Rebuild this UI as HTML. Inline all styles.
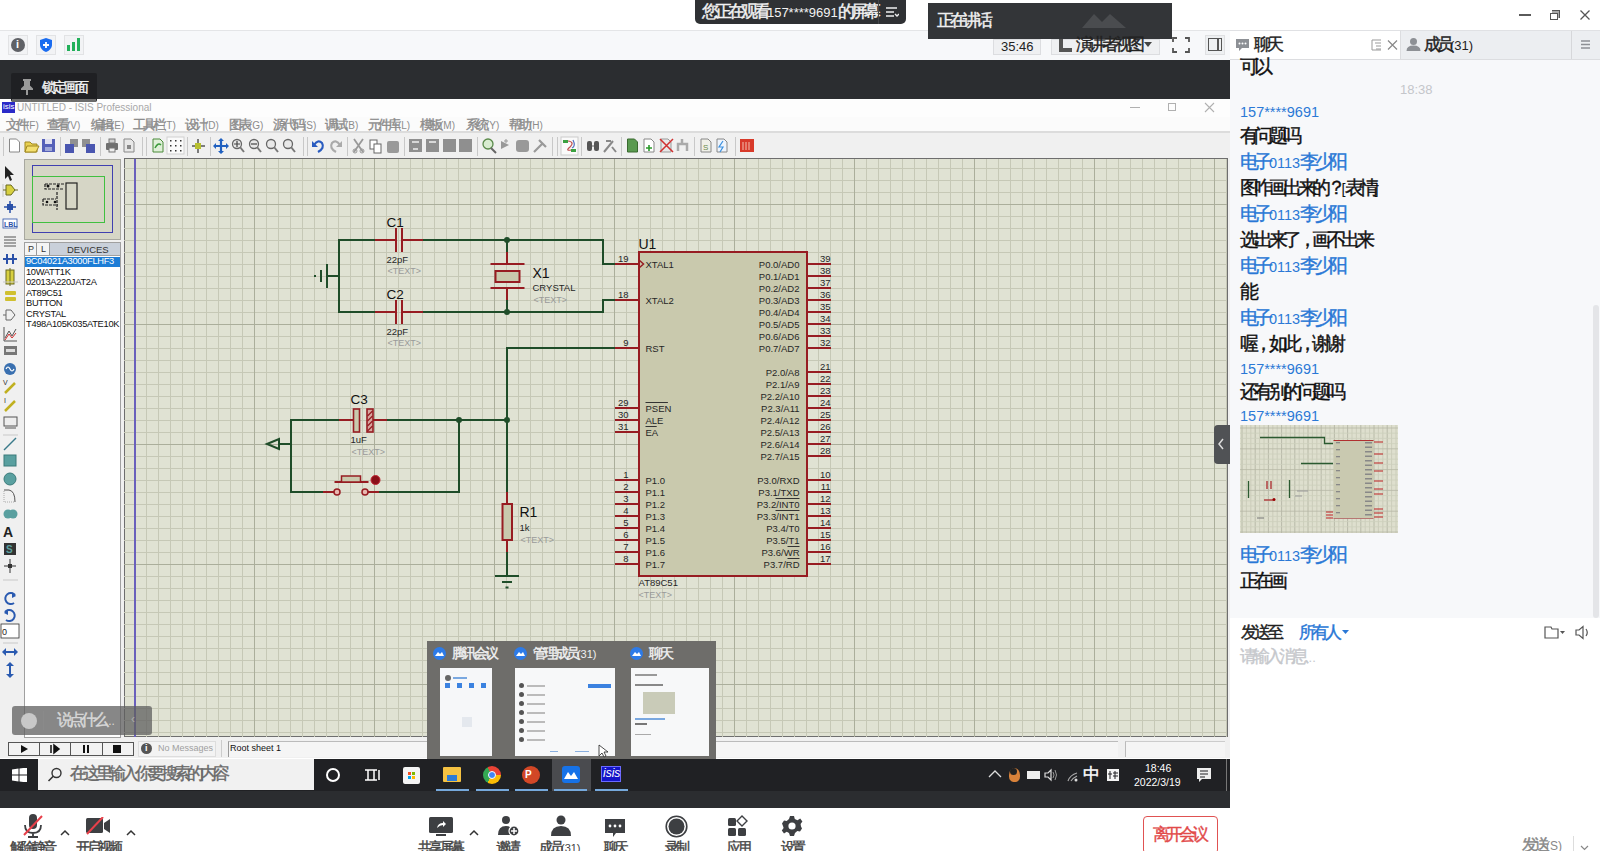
<!DOCTYPE html>
<html><head><meta charset="utf-8">
<style>
*{margin:0;padding:0;box-sizing:border-box}
html,body{width:1600px;height:851px;overflow:hidden;background:#fff;font-family:"Liberation Sans",sans-serif;position:relative}
.a{position:absolute}
.t{position:absolute;white-space:nowrap;line-height:1}
svg text{font-family:"Liberation Sans",sans-serif}
.c{display:inline-block;width:0.769em;font-size:1.3em;line-height:0.769;font-style:normal;text-align:center;-webkit-text-stroke-width:0.4px}
</style></head><body>

<div class="a" style="left:0;top:0;width:1600px;height:30px;background:#fff"></div>
<div class="a" style="left:0;top:30px;width:1230px;height:30px;background:#f7f8fa;border-top:1px solid #e4e5e7"></div>
<div class="a" style="left:0;top:60px;width:1230px;height:39px;background:#2b2d30"></div>
<div class="a" style="left:0;top:99px;width:1230px;height:659px;background:#f0f0f0;overflow:hidden">
<div class="a" style="left:0;top:0;width:1230px;height:18px;background:#fdfdfd"></div>
<div class="a" style="left:2px;top:3px;width:13px;height:11px;background:#2a2ac8"></div><div class="t" style="left:3px;top:4px;font-size:8px;color:#fff">isis</div>
<div class="t" style="left:17px;top:4px;font-size:10px;color:#a8a8a8">UNTITLED - ISIS Professional</div>
<div class="a" style="left:1130px;top:8px;width:10px;height:1px;background:#b0b0b0"></div>
<div class="a" style="left:1168px;top:4px;width:8px;height:8px;border:1px solid #b0b0b0"></div>
<svg class="a" style="left:1204px;top:3px" width="11" height="11"><path d="M1 1L10 10M10 1L1 10" stroke="#b0b0b0" stroke-width="1.1"/></svg>
<div class="a" style="left:0;top:18px;width:1230px;height:16px;background:#fbfbfb;border-bottom:2px solid #dcdcdc"></div>
<div class="t" style="left:6px;top:21px;font-size:10px;color:#8c8c8c"><i class="c">文</i><i class="c">件</i>(F)</div>
<div class="t" style="left:47px;top:21px;font-size:10px;color:#8c8c8c"><i class="c">查</i><i class="c">看</i>(V)</div>
<div class="t" style="left:91px;top:21px;font-size:10px;color:#8c8c8c"><i class="c">编</i><i class="c">辑</i>(E)</div>
<div class="t" style="left:133px;top:21px;font-size:10px;color:#8c8c8c"><i class="c">工</i><i class="c">具</i><i class="c">栏</i>(T)</div>
<div class="t" style="left:185px;top:21px;font-size:10px;color:#8c8c8c"><i class="c">设</i><i class="c">计</i>(D)</div>
<div class="t" style="left:229px;top:21px;font-size:10px;color:#8c8c8c"><i class="c">图</i><i class="c">表</i>(G)</div>
<div class="t" style="left:273px;top:21px;font-size:10px;color:#8c8c8c"><i class="c">源</i><i class="c">代</i><i class="c">码</i>(S)</div>
<div class="t" style="left:325px;top:21px;font-size:10px;color:#8c8c8c"><i class="c">调</i><i class="c">试</i>(B)</div>
<div class="t" style="left:368px;top:21px;font-size:10px;color:#8c8c8c"><i class="c">元</i><i class="c">件</i><i class="c">库</i>(L)</div>
<div class="t" style="left:420px;top:21px;font-size:10px;color:#8c8c8c"><i class="c">模</i><i class="c">板</i>(M)</div>
<div class="t" style="left:466px;top:21px;font-size:10px;color:#8c8c8c"><i class="c">系</i><i class="c">统</i>(Y)</div>
<div class="t" style="left:509px;top:21px;font-size:10px;color:#8c8c8c"><i class="c">帮</i><i class="c">助</i>(H)</div>
<div class="a" style="left:0;top:59px;width:22px;height:580px;background:#f0f0f0"></div>
<div class="a" style="left:24px;top:60px;width:97px;height:81px;background:#d6d6c6;border:1px solid #a8a8a0"></div>
<div class="a" style="left:32px;top:66px;width:81px;height:68px;border:1.5px solid #4040b0"></div>
<div class="a" style="left:32px;top:77px;width:73px;height:47px;border:1.5px solid #40c040"></div>
<svg class="a" style="left:0;top:0" width="130" height="140" viewBox="0 99 130 140"><g stroke="#222" stroke-width="1.2" fill="none"><rect x="66" y="183" width="11" height="26"/><path d="M45 184V189H64M45 184H64M43 199V205H58M43 199H56M57 192V210" stroke-dasharray="3 1"/></g><g fill="#111"><circle cx="48" cy="186" r="1.5"/><circle cx="58" cy="186" r="1.5"/><circle cx="47" cy="202" r="1.3"/><circle cx="55" cy="202" r="1.3"/></g></svg>
<div class="a" style="left:24px;top:143px;width:97px;height:496px;background:#fff;border:1px solid #a0a0a0"></div>
<div class="a" style="left:24px;top:143px;width:97px;height:14px;background:#c9d0da;border:1px solid #a0a0a0"></div>
<div class="a" style="left:25px;top:144px;width:12px;height:12px;background:#f4f4f4;border-right:1px solid #999"></div><div class="t" style="left:28px;top:146px;font-size:9px;color:#333">P</div>
<div class="a" style="left:37px;top:144px;width:13px;height:12px;background:#f4f4f4;border-right:1px solid #999"></div><div class="t" style="left:41px;top:146px;font-size:9px;color:#333">L</div>
<div class="t" style="left:67px;top:146px;font-size:9.5px;color:#333">DEVICES</div>
<div class="a" style="left:25px;top:158px;width:95px;height:10px;background:#1d7dd6"></div>
<div class="t" style="left:26px;top:158.0px;font-size:9.3px;letter-spacing:-0.3px;color:#fff">9C04021A3000FLHF3</div>
<div class="t" style="left:26px;top:168.5px;font-size:9.3px;letter-spacing:-0.3px;color:#111">10WATT1K</div>
<div class="t" style="left:26px;top:179.0px;font-size:9.3px;letter-spacing:-0.3px;color:#111">02013A220JAT2A</div>
<div class="t" style="left:26px;top:189.5px;font-size:9.3px;letter-spacing:-0.3px;color:#111">AT89C51</div>
<div class="t" style="left:26px;top:200.0px;font-size:9.3px;letter-spacing:-0.3px;color:#111">BUTTON</div>
<div class="t" style="left:26px;top:210.5px;font-size:9.3px;letter-spacing:-0.3px;color:#111">CRYSTAL</div>
<div class="t" style="left:26px;top:221.0px;font-size:9.3px;letter-spacing:-0.3px;color:#111">T498A105K035ATE10K</div>
<div class="a" style="left:124px;top:59px;width:1104px;height:579px;background:#e0e2d3;border:1px solid #6e6e6e"></div>
</div>
<svg class="a" style="left:0;top:0" width="1230" height="760" viewBox="0 0 1230 760">
<defs>
<pattern id="gm" x="134" y="204" width="12" height="12" patternUnits="userSpaceOnUse"><path d="M0 0.5H12M0.5 0V12" stroke="#c6c8b6" stroke-width="1" fill="none"/></pattern>
<pattern id="gM" x="134" y="204" width="120" height="120" patternUnits="userSpaceOnUse"><path d="M0 0.5H120M0.5 0V120" stroke="#abae9b" stroke-width="1" fill="none"/></pattern>
</defs>
<rect x="124" y="159" width="1103" height="578" fill="url(#gm)"/>
<rect x="124" y="159" width="1103" height="578" fill="url(#gM)"/>
<line x1="135" y1="159" x2="135" y2="737" stroke="#6a60bc" stroke-width="2"/>

<g transform="translate(0.5,0)"><path d="M374.5 240H338.5V312H374.5" stroke="#1f4d29" stroke-width="2" fill="none"/>
<path d="M422.5 240H602.5V264H614.5" stroke="#1f4d29" stroke-width="2" fill="none"/>
<path d="M422.5 312H602.5V300H614.5" stroke="#1f4d29" stroke-width="2" fill="none"/>
<line x1="506.5" y1="240" x2="506.5" y2="252" stroke="#1f4d29" stroke-width="2"/>
<line x1="506.5" y1="300" x2="506.5" y2="312" stroke="#1f4d29" stroke-width="2"/>
<path d="M614.5 348H506.5V492" stroke="#1f4d29" stroke-width="2" fill="none"/>
<path d="M506.5 552V576" stroke="#1f4d29" stroke-width="2" fill="none"/>
<path d="M338.5 420H290.5V492H322.5" stroke="#1f4d29" stroke-width="2" fill="none"/>
<path d="M386.5 420H506.5" stroke="#1f4d29" stroke-width="2" fill="none"/>
<path d="M378.5 492H458.5V420" stroke="#1f4d29" stroke-width="2" fill="none"/>
<path d="M278.5 444H290.5" stroke="#1f4d29" stroke-width="2" fill="none"/>
<path d="M338.5 276H326.5" stroke="#1f4d29" stroke-width="2" fill="none"/>
<circle cx="506.5" cy="240" r="3" fill="#1f4d29"/>
<circle cx="506.5" cy="312" r="3" fill="#1f4d29"/>
<circle cx="458.5" cy="420" r="3" fill="#1f4d29"/>
<circle cx="506.5" cy="420" r="3" fill="#1f4d29"/>
<line x1="326.5" y1="264" x2="326.5" y2="288" stroke="#1f4d29" stroke-width="2"/>
<line x1="320.5" y1="270" x2="320.5" y2="282" stroke="#1f4d29" stroke-width="2"/>
<line x1="314.5" y1="275" x2="314.5" y2="277" stroke="#1f4d29" stroke-width="2"/>
<path d="M266.5 444L278.5 439V449Z" stroke="#1f4d29" stroke-width="2" fill="none"/>
<line x1="374.5" y1="240" x2="395.5" y2="240" stroke="#971c22" stroke-width="2"/>
<line x1="401.5" y1="240" x2="422.5" y2="240" stroke="#971c22" stroke-width="2"/>
<line x1="395.5" y1="228" x2="395.5" y2="252" stroke="#971c22" stroke-width="2"/>
<line x1="401.5" y1="228" x2="401.5" y2="252" stroke="#971c22" stroke-width="2"/>
<line x1="374.5" y1="312" x2="395.5" y2="312" stroke="#971c22" stroke-width="2"/>
<line x1="401.5" y1="312" x2="422.5" y2="312" stroke="#971c22" stroke-width="2"/>
<line x1="395.5" y1="300" x2="395.5" y2="324" stroke="#971c22" stroke-width="2"/>
<line x1="401.5" y1="300" x2="401.5" y2="324" stroke="#971c22" stroke-width="2"/>
<line x1="506.5" y1="252" x2="506.5" y2="264" stroke="#971c22" stroke-width="2"/>
<line x1="506.5" y1="288" x2="506.5" y2="300" stroke="#971c22" stroke-width="2"/>
<line x1="490" y1="264" x2="524" y2="264" stroke="#971c22" stroke-width="2"/>
<line x1="490" y1="288" x2="524" y2="288" stroke="#971c22" stroke-width="2"/>
<rect x="495" y="271" width="24" height="11" fill="#c9c9ad" stroke="#971c22" stroke-width="2"/>
<line x1="338.5" y1="420" x2="352.5" y2="420" stroke="#971c22" stroke-width="2"/>
<line x1="372.5" y1="420" x2="386.5" y2="420" stroke="#971c22" stroke-width="2"/>
<rect x="353" y="409" width="6" height="23" fill="#c9c9ad" stroke="#971c22" stroke-width="1.6"/>
<rect x="366.5" y="409" width="6" height="23" fill="#d8a8a0" stroke="#971c22" stroke-width="1.6"/>
<line x1="367" y1="416" x2="372" y2="411" stroke="#971c22" stroke-width="1.2"/>
<line x1="367" y1="421" x2="372" y2="416" stroke="#971c22" stroke-width="1.2"/>
<line x1="367" y1="426" x2="372" y2="421" stroke="#971c22" stroke-width="1.2"/>
<line x1="367" y1="431" x2="372" y2="426" stroke="#971c22" stroke-width="1.2"/>
<line x1="322.5" y1="492" x2="333.5" y2="492" stroke="#971c22" stroke-width="2"/>
<line x1="367.5" y1="492" x2="378.5" y2="492" stroke="#971c22" stroke-width="2"/>
<circle cx="336.5" cy="492" r="3" fill="#e8b8b0" stroke="#971c22" stroke-width="1.5"/>
<circle cx="364.5" cy="492" r="3" fill="#e8b8b0" stroke="#971c22" stroke-width="1.5"/>
<line x1="334" y1="482" x2="368" y2="482" stroke="#971c22" stroke-width="2"/>
<rect x="341" y="476" width="19" height="6" fill="#c9c9ad" stroke="#971c22" stroke-width="1.5"/>
<circle cx="375" cy="480" r="4.5" fill="#8a0f18" stroke="#c02030" stroke-width="1"/>
<line x1="506.5" y1="492" x2="506.5" y2="504" stroke="#971c22" stroke-width="2"/>
<line x1="506.5" y1="540" x2="506.5" y2="552" stroke="#971c22" stroke-width="2"/>
<rect x="502" y="504" width="9.5" height="36" fill="#c9c9ad" stroke="#971c22" stroke-width="2"/>
<line x1="494.5" y1="576" x2="518.5" y2="576" stroke="#1f4d29" stroke-width="2"/>
<line x1="501.5" y1="582" x2="511.5" y2="582" stroke="#1f4d29" stroke-width="2"/>
<line x1="505" y1="587.5" x2="508" y2="587.5" stroke="#1f4d29" stroke-width="2"/>
<rect x="638.5" y="252" width="168" height="324" fill="#c9c9ad" stroke="#971c22" stroke-width="2"/>
<line x1="614.5" y1="264" x2="638.5" y2="264" stroke="#971c22" stroke-width="2"/>
<text x="628" y="261.5" font-size="9.5" fill="#262626" text-anchor="end" >19</text>
<text x="645" y="267.5" font-size="9.5" fill="#262626" text-anchor="start" >XTAL1</text>
<line x1="614.5" y1="300" x2="638.5" y2="300" stroke="#971c22" stroke-width="2"/>
<text x="628" y="297.5" font-size="9.5" fill="#262626" text-anchor="end" >18</text>
<text x="645" y="303.5" font-size="9.5" fill="#262626" text-anchor="start" >XTAL2</text>
<line x1="614.5" y1="348" x2="638.5" y2="348" stroke="#971c22" stroke-width="2"/>
<text x="628" y="345.5" font-size="9.5" fill="#262626" text-anchor="end" >9</text>
<text x="645" y="351.5" font-size="9.5" fill="#262626" text-anchor="start" >RST</text>
<line x1="614.5" y1="408" x2="638.5" y2="408" stroke="#971c22" stroke-width="2"/>
<text x="628" y="405.5" font-size="9.5" fill="#262626" text-anchor="end" >29</text>
<text x="645" y="411.5" font-size="9.5" fill="#262626" text-anchor="start" >PSEN</text>
<line x1="645" y1="402.5" x2="667.4" y2="402.5" stroke="#333" stroke-width="1"/>
<line x1="614.5" y1="420" x2="638.5" y2="420" stroke="#971c22" stroke-width="2"/>
<text x="628" y="417.5" font-size="9.5" fill="#262626" text-anchor="end" >30</text>
<text x="645" y="423.5" font-size="9.5" fill="#262626" text-anchor="start" >ALE</text>
<line x1="614.5" y1="432" x2="638.5" y2="432" stroke="#971c22" stroke-width="2"/>
<text x="628" y="429.5" font-size="9.5" fill="#262626" text-anchor="end" >31</text>
<text x="645" y="435.5" font-size="9.5" fill="#262626" text-anchor="start" >EA</text>
<line x1="645" y1="426.5" x2="656.2" y2="426.5" stroke="#333" stroke-width="1"/>
<line x1="614.5" y1="480" x2="638.5" y2="480" stroke="#971c22" stroke-width="2"/>
<text x="628" y="477.5" font-size="9.5" fill="#262626" text-anchor="end" >1</text>
<text x="645" y="483.5" font-size="9.5" fill="#262626" text-anchor="start" >P1.0</text>
<line x1="614.5" y1="492" x2="638.5" y2="492" stroke="#971c22" stroke-width="2"/>
<text x="628" y="489.5" font-size="9.5" fill="#262626" text-anchor="end" >2</text>
<text x="645" y="495.5" font-size="9.5" fill="#262626" text-anchor="start" >P1.1</text>
<line x1="614.5" y1="504" x2="638.5" y2="504" stroke="#971c22" stroke-width="2"/>
<text x="628" y="501.5" font-size="9.5" fill="#262626" text-anchor="end" >3</text>
<text x="645" y="507.5" font-size="9.5" fill="#262626" text-anchor="start" >P1.2</text>
<line x1="614.5" y1="516" x2="638.5" y2="516" stroke="#971c22" stroke-width="2"/>
<text x="628" y="513.5" font-size="9.5" fill="#262626" text-anchor="end" >4</text>
<text x="645" y="519.5" font-size="9.5" fill="#262626" text-anchor="start" >P1.3</text>
<line x1="614.5" y1="528" x2="638.5" y2="528" stroke="#971c22" stroke-width="2"/>
<text x="628" y="525.5" font-size="9.5" fill="#262626" text-anchor="end" >5</text>
<text x="645" y="531.5" font-size="9.5" fill="#262626" text-anchor="start" >P1.4</text>
<line x1="614.5" y1="540" x2="638.5" y2="540" stroke="#971c22" stroke-width="2"/>
<text x="628" y="537.5" font-size="9.5" fill="#262626" text-anchor="end" >6</text>
<text x="645" y="543.5" font-size="9.5" fill="#262626" text-anchor="start" >P1.5</text>
<line x1="614.5" y1="552" x2="638.5" y2="552" stroke="#971c22" stroke-width="2"/>
<text x="628" y="549.5" font-size="9.5" fill="#262626" text-anchor="end" >7</text>
<text x="645" y="555.5" font-size="9.5" fill="#262626" text-anchor="start" >P1.6</text>
<line x1="614.5" y1="564" x2="638.5" y2="564" stroke="#971c22" stroke-width="2"/>
<text x="628" y="561.5" font-size="9.5" fill="#262626" text-anchor="end" >8</text>
<text x="645" y="567.5" font-size="9.5" fill="#262626" text-anchor="start" >P1.7</text>
<line x1="806.5" y1="264" x2="830.5" y2="264" stroke="#971c22" stroke-width="2"/>
<text x="830" y="261.5" font-size="9.5" fill="#262626" text-anchor="end" >39</text>
<text x="799" y="267.5" font-size="9.5" fill="#262626" text-anchor="end" >P0.0/AD0</text>
<line x1="806.5" y1="276" x2="830.5" y2="276" stroke="#971c22" stroke-width="2"/>
<text x="830" y="273.5" font-size="9.5" fill="#262626" text-anchor="end" >38</text>
<text x="799" y="279.5" font-size="9.5" fill="#262626" text-anchor="end" >P0.1/AD1</text>
<line x1="806.5" y1="288" x2="830.5" y2="288" stroke="#971c22" stroke-width="2"/>
<text x="830" y="285.5" font-size="9.5" fill="#262626" text-anchor="end" >37</text>
<text x="799" y="291.5" font-size="9.5" fill="#262626" text-anchor="end" >P0.2/AD2</text>
<line x1="806.5" y1="300" x2="830.5" y2="300" stroke="#971c22" stroke-width="2"/>
<text x="830" y="297.5" font-size="9.5" fill="#262626" text-anchor="end" >36</text>
<text x="799" y="303.5" font-size="9.5" fill="#262626" text-anchor="end" >P0.3/AD3</text>
<line x1="806.5" y1="312" x2="830.5" y2="312" stroke="#971c22" stroke-width="2"/>
<text x="830" y="309.5" font-size="9.5" fill="#262626" text-anchor="end" >35</text>
<text x="799" y="315.5" font-size="9.5" fill="#262626" text-anchor="end" >P0.4/AD4</text>
<line x1="806.5" y1="324" x2="830.5" y2="324" stroke="#971c22" stroke-width="2"/>
<text x="830" y="321.5" font-size="9.5" fill="#262626" text-anchor="end" >34</text>
<text x="799" y="327.5" font-size="9.5" fill="#262626" text-anchor="end" >P0.5/AD5</text>
<line x1="806.5" y1="336" x2="830.5" y2="336" stroke="#971c22" stroke-width="2"/>
<text x="830" y="333.5" font-size="9.5" fill="#262626" text-anchor="end" >33</text>
<text x="799" y="339.5" font-size="9.5" fill="#262626" text-anchor="end" >P0.6/AD6</text>
<line x1="806.5" y1="348" x2="830.5" y2="348" stroke="#971c22" stroke-width="2"/>
<text x="830" y="345.5" font-size="9.5" fill="#262626" text-anchor="end" >32</text>
<text x="799" y="351.5" font-size="9.5" fill="#262626" text-anchor="end" >P0.7/AD7</text>
<line x1="806.5" y1="372" x2="830.5" y2="372" stroke="#971c22" stroke-width="2"/>
<text x="830" y="369.5" font-size="9.5" fill="#262626" text-anchor="end" >21</text>
<text x="799" y="375.5" font-size="9.5" fill="#262626" text-anchor="end" >P2.0/A8</text>
<line x1="806.5" y1="384" x2="830.5" y2="384" stroke="#971c22" stroke-width="2"/>
<text x="830" y="381.5" font-size="9.5" fill="#262626" text-anchor="end" >22</text>
<text x="799" y="387.5" font-size="9.5" fill="#262626" text-anchor="end" >P2.1/A9</text>
<line x1="806.5" y1="396" x2="830.5" y2="396" stroke="#971c22" stroke-width="2"/>
<text x="830" y="393.5" font-size="9.5" fill="#262626" text-anchor="end" >23</text>
<text x="799" y="399.5" font-size="9.5" fill="#262626" text-anchor="end" >P2.2/A10</text>
<line x1="806.5" y1="408" x2="830.5" y2="408" stroke="#971c22" stroke-width="2"/>
<text x="830" y="405.5" font-size="9.5" fill="#262626" text-anchor="end" >24</text>
<text x="799" y="411.5" font-size="9.5" fill="#262626" text-anchor="end" >P2.3/A11</text>
<line x1="806.5" y1="420" x2="830.5" y2="420" stroke="#971c22" stroke-width="2"/>
<text x="830" y="417.5" font-size="9.5" fill="#262626" text-anchor="end" >25</text>
<text x="799" y="423.5" font-size="9.5" fill="#262626" text-anchor="end" >P2.4/A12</text>
<line x1="806.5" y1="432" x2="830.5" y2="432" stroke="#971c22" stroke-width="2"/>
<text x="830" y="429.5" font-size="9.5" fill="#262626" text-anchor="end" >26</text>
<text x="799" y="435.5" font-size="9.5" fill="#262626" text-anchor="end" >P2.5/A13</text>
<line x1="806.5" y1="444" x2="830.5" y2="444" stroke="#971c22" stroke-width="2"/>
<text x="830" y="441.5" font-size="9.5" fill="#262626" text-anchor="end" >27</text>
<text x="799" y="447.5" font-size="9.5" fill="#262626" text-anchor="end" >P2.6/A14</text>
<line x1="806.5" y1="456" x2="830.5" y2="456" stroke="#971c22" stroke-width="2"/>
<text x="830" y="453.5" font-size="9.5" fill="#262626" text-anchor="end" >28</text>
<text x="799" y="459.5" font-size="9.5" fill="#262626" text-anchor="end" >P2.7/A15</text>
<line x1="806.5" y1="480" x2="830.5" y2="480" stroke="#971c22" stroke-width="2"/>
<text x="830" y="477.5" font-size="9.5" fill="#262626" text-anchor="end" >10</text>
<text x="799" y="483.5" font-size="9.5" fill="#262626" text-anchor="end" >P3.0/RXD</text>
<line x1="806.5" y1="492" x2="830.5" y2="492" stroke="#971c22" stroke-width="2"/>
<text x="830" y="489.5" font-size="9.5" fill="#262626" text-anchor="end" >11</text>
<text x="799" y="495.5" font-size="9.5" fill="#262626" text-anchor="end" >P3.1/TXD</text>
<line x1="806.5" y1="504" x2="830.5" y2="504" stroke="#971c22" stroke-width="2"/>
<text x="830" y="501.5" font-size="9.5" fill="#262626" text-anchor="end" >12</text>
<text x="799" y="507.5" font-size="9.5" fill="#262626" text-anchor="end" >P3.2/INT0</text>
<line x1="775" y1="498.5" x2="799" y2="498.5" stroke="#333" stroke-width="1"/>
<line x1="806.5" y1="516" x2="830.5" y2="516" stroke="#971c22" stroke-width="2"/>
<text x="830" y="513.5" font-size="9.5" fill="#262626" text-anchor="end" >13</text>
<text x="799" y="519.5" font-size="9.5" fill="#262626" text-anchor="end" >P3.3/INT1</text>
<line x1="775" y1="510.5" x2="799" y2="510.5" stroke="#333" stroke-width="1"/>
<line x1="806.5" y1="528" x2="830.5" y2="528" stroke="#971c22" stroke-width="2"/>
<text x="830" y="525.5" font-size="9.5" fill="#262626" text-anchor="end" >14</text>
<text x="799" y="531.5" font-size="9.5" fill="#262626" text-anchor="end" >P3.4/T0</text>
<line x1="806.5" y1="540" x2="830.5" y2="540" stroke="#971c22" stroke-width="2"/>
<text x="830" y="537.5" font-size="9.5" fill="#262626" text-anchor="end" >15</text>
<text x="799" y="543.5" font-size="9.5" fill="#262626" text-anchor="end" >P3.5/T1</text>
<line x1="806.5" y1="552" x2="830.5" y2="552" stroke="#971c22" stroke-width="2"/>
<text x="830" y="549.5" font-size="9.5" fill="#262626" text-anchor="end" >16</text>
<text x="799" y="555.5" font-size="9.5" fill="#262626" text-anchor="end" >P3.6/WR</text>
<line x1="787" y1="546.5" x2="799" y2="546.5" stroke="#333" stroke-width="1"/>
<line x1="806.5" y1="564" x2="830.5" y2="564" stroke="#971c22" stroke-width="2"/>
<text x="830" y="561.5" font-size="9.5" fill="#262626" text-anchor="end" >17</text>
<text x="799" y="567.5" font-size="9.5" fill="#262626" text-anchor="end" >P3.7/RD</text>
<line x1="787" y1="558.5" x2="799" y2="558.5" stroke="#333" stroke-width="1"/>
<path d="M638.5 260L643 264L638.5 268" stroke="#971c22" stroke-width="1.5" fill="none"/>
<text x="386" y="227" font-size="13.5" fill="#111" text-anchor="start" >C1</text>
<text x="386" y="263" font-size="9.5" fill="#262626" text-anchor="start" >22pF</text>
<text x="387" y="274" font-size="9" fill="#9a9a9a" text-anchor="start" >&lt;TEXT&gt;</text>
<text x="386" y="299" font-size="13.5" fill="#111" text-anchor="start" >C2</text>
<text x="386" y="335" font-size="9.5" fill="#262626" text-anchor="start" >22pF</text>
<text x="387" y="346" font-size="9" fill="#9a9a9a" text-anchor="start" >&lt;TEXT&gt;</text>
<text x="532" y="278" font-size="14" fill="#111" text-anchor="start" >X1</text>
<text x="532" y="291" font-size="9.5" fill="#262626" text-anchor="start" >CRYSTAL</text>
<text x="533" y="303" font-size="9" fill="#9a9a9a" text-anchor="start" >&lt;TEXT&gt;</text>
<text x="638" y="249" font-size="14" fill="#111" text-anchor="start" >U1</text>
<text x="638" y="586" font-size="9.5" fill="#262626" text-anchor="start" >AT89C51</text>
<text x="638" y="598" font-size="9" fill="#9a9a9a" text-anchor="start" >&lt;TEXT&gt;</text>
<text x="350" y="404" font-size="13.5" fill="#111" text-anchor="start" >C3</text>
<text x="350" y="443" font-size="9.5" fill="#262626" text-anchor="start" >1uF</text>
<text x="351" y="455" font-size="9" fill="#9a9a9a" text-anchor="start" >&lt;TEXT&gt;</text>
<text x="519" y="517" font-size="14" fill="#111" text-anchor="start" >R1</text>
<text x="519" y="531" font-size="9.5" fill="#262626" text-anchor="start" >1k</text>
<text x="520" y="543" font-size="9" fill="#9a9a9a" text-anchor="start" >&lt;TEXT&gt;</text></g>
</svg>
<svg class="a" style="left:0;top:0" width="760" height="760" viewBox="0 0 760 760">
<path d="M3.5 137V156" stroke="#c8c8c8" stroke-width="1"/>
<path d="M60.5 137V156" stroke="#c8c8c8" stroke-width="1"/>
<path d="M100.5 137V156" stroke="#c8c8c8" stroke-width="1"/>
<path d="M142.5 137V156" stroke="#c8c8c8" stroke-width="1"/>
<path d="M146.5 137V156" stroke="#c8c8c8" stroke-width="1"/>
<path d="M187.5 137V156" stroke="#c8c8c8" stroke-width="1"/>
<path d="M210.5 137V156" stroke="#c8c8c8" stroke-width="1"/>
<path d="M303.5 137V156" stroke="#c8c8c8" stroke-width="1"/>
<path d="M307.5 137V156" stroke="#c8c8c8" stroke-width="1"/>
<path d="M347.5 137V156" stroke="#c8c8c8" stroke-width="1"/>
<path d="M404.5 137V156" stroke="#c8c8c8" stroke-width="1"/>
<path d="M477.5 137V156" stroke="#c8c8c8" stroke-width="1"/>
<path d="M552.5 137V156" stroke="#c8c8c8" stroke-width="1"/>
<path d="M557.5 137V156" stroke="#c8c8c8" stroke-width="1"/>
<path d="M581.5 137V156" stroke="#c8c8c8" stroke-width="1"/>
<path d="M621.5 137V156" stroke="#c8c8c8" stroke-width="1"/>
<path d="M694.5 137V156" stroke="#c8c8c8" stroke-width="1"/>
<path d="M735.5 137V156" stroke="#c8c8c8" stroke-width="1"/>
<path d="M9.5 139H16.5L19.5 142V152H9.5Z" fill="#fff" stroke="#888" stroke-width="1"/>
<path d="M25 142H30L32 144H37V152H25Z" fill="#e8d050" stroke="#a08820"/><path d="M27 146H39L36 152H25Z" fill="#f4e070" stroke="#a08820"/>
<rect x="42" y="139" width="13" height="13" fill="#5560b8"/><rect x="45" y="139" width="7" height="5" fill="#e0e0f0"/><rect x="45" y="147" width="7" height="4" fill="#a0a8d8"/>
<rect x="70" y="139" width="8" height="8" fill="#909090"/><rect x="65" y="144" width="9" height="9" fill="#4a56b0"/>
<rect x="82" y="139" width="8" height="8" fill="#909090"/><rect x="86" y="144" width="9" height="9" fill="#4a56b0"/>
<rect x="106" y="143" width="12" height="7" rx="1" fill="#707070"/><rect x="109" y="139" width="6" height="4" fill="#d0d0d0" stroke="#777"/><rect x="109" y="148" width="6" height="4" fill="#eee" stroke="#777"/>
<path d="M124 139H131L134 142V152H124Z" fill="#e8e8e8" stroke="#888" stroke-width="1"/>
<rect x="127" y="145" width="4" height="4" fill="#888"/>
<path d="M153 139H160L163 142V152H153Z" fill="#dff0d8" stroke="#4a8a3a" stroke-width="1"/>
<path d="M155 148Q158 142 161 145" stroke="#3a9a3a" stroke-width="1.5" fill="none"/>
<rect x="167" y="137" width="17" height="17" fill="#fafafa" stroke="#d0d0d0"/>
<rect x="170" y="140" width="1.5" height="1.5" fill="#333"/>
<rect x="170" y="145" width="1.5" height="1.5" fill="#333"/>
<rect x="170" y="150" width="1.5" height="1.5" fill="#333"/>
<rect x="175" y="140" width="1.5" height="1.5" fill="#333"/>
<rect x="175" y="145" width="1.5" height="1.5" fill="#333"/>
<rect x="175" y="150" width="1.5" height="1.5" fill="#333"/>
<rect x="180" y="140" width="1.5" height="1.5" fill="#333"/>
<rect x="180" y="145" width="1.5" height="1.5" fill="#333"/>
<rect x="180" y="150" width="1.5" height="1.5" fill="#333"/>
<path d="M198 139V153M192 146H205" stroke="#555" stroke-width="1.5"/><rect x="195" y="143" width="6" height="6" fill="#b8c030"/>
<path d="M221 139V153M214 146H228" stroke="#2060c0" stroke-width="2.2"/><path d="M221 138L218 141H224ZM221 154L218 151H224ZM213 146L216 143V149ZM229 146L226 143V149Z" fill="#2060c0"/>
<circle cx="237" cy="144" r="4.5" fill="#e8e8e8" stroke="#666" stroke-width="1.3"/><path d="M240 147L244 152" stroke="#777" stroke-width="2"/>
<path d="M234 144H240M237 141V147" stroke="#444" stroke-width="1.2"/>
<circle cx="254" cy="144" r="4.5" fill="#e8e8e8" stroke="#666" stroke-width="1.3"/><path d="M257 147L261 152" stroke="#777" stroke-width="2"/>
<path d="M251 144H257" stroke="#444" stroke-width="1.2"/>
<circle cx="271" cy="144" r="4.5" fill="#e8e8e8" stroke="#666" stroke-width="1.3"/><path d="M274 147L278 152" stroke="#777" stroke-width="2"/>
<circle cx="288" cy="144" r="4.5" fill="#e8e8e8" stroke="#666" stroke-width="1.3"/><path d="M291 147L295 152" stroke="#777" stroke-width="2"/>
<path d="M314 145Q318 139 322 143Q325 148 318 152" stroke="#2a5cc0" stroke-width="2.2" fill="none"/><path d="M312 141V147H318Z" fill="#2a5cc0"/>
<path d="M340 145Q336 139 332 143Q329 148 336 152" stroke="#aaa" stroke-width="2.2" fill="none"/><path d="M342 141V147H336Z" fill="#aaa"/>
<path d="M354 139L363 152M363 139L354 152" stroke="#999" stroke-width="1.8"/><circle cx="355" cy="151" r="2" fill="none" stroke="#999"/><circle cx="362" cy="151" r="2" fill="none" stroke="#999"/>
<rect x="370" y="140" width="7" height="9" fill="#fff" stroke="#666"/><rect x="374" y="144" width="7" height="9" fill="#fff" stroke="#666"/>
<rect x="387" y="141" width="12" height="12" rx="2" fill="#9a9a9a"/>
<rect x="409" y="139" width="13" height="13" fill="#8f8f8f"/>
<rect x="426" y="139" width="13" height="13" fill="#8f8f8f"/>
<rect x="443" y="139" width="13" height="13" fill="#8f8f8f"/>
<rect x="459" y="139" width="13" height="13" fill="#8f8f8f"/>
<path d="M412 142H419M413 149H418" stroke="#f0f0f0" stroke-width="1.5"/><path d="M429 142H436" stroke="#f0f0f0" stroke-width="1.5"/>
<circle cx="488" cy="144" r="5" fill="#d8ecd0" stroke="#5a8a4a" stroke-width="1.3"/><path d="M491 148L496 153" stroke="#666" stroke-width="2"/>
<path d="M501 149L509 145L501 141Z" fill="#999"/><path d="M506 139V143M504 141H508" stroke="#999"/>
<rect x="516" y="140" width="13" height="12" rx="3" fill="#999"/>
<path d="M534 152L543 143M539 140L546 147" stroke="#999" stroke-width="2.2"/>
<rect x="561" y="137" width="17" height="18" fill="#fafafa" stroke="#ccc"/><rect x="563" y="140" width="5" height="3" fill="#3aa040"/><rect x="571" y="149" width="5" height="3" fill="#3aa040"/><path d="M568 141Q575 142 570 147Q565 151 571 150" stroke="#c05050" stroke-width="1.2" fill="none"/><path d="M573 140Q576 146 572 148" stroke="#5070c0" stroke-width="1.2" fill="none"/>
<path d="M588 146H599" stroke="#666" stroke-width="1"/><rect x="587" y="141" width="5" height="10" rx="2" fill="#555"/><rect x="594" y="141" width="5" height="10" rx="2" fill="#555"/>
<path d="M604 152L613 141M606 141H611M612 147L616 152" stroke="#888" stroke-width="2"/>
<path d="M627.5 139H634.5L637.5 142V152H627.5Z" fill="#5a9a50" stroke="#3a6a30" stroke-width="1"/>
<path d="M644 139H651L654 142V152H644Z" fill="#fff" stroke="#888" stroke-width="1"/>
<path d="M646 148H652M649 145V151" stroke="#2a9a2a" stroke-width="1.6"/>
<path d="M661 139H668L671 142V152H661Z" fill="#e8e8e8" stroke="#999" stroke-width="1"/>
<path d="M660 139L673 152M673 139L660 152" stroke="#d03030" stroke-width="1.5"/>
<path d="M678 151V144H687V151M682 139V144" stroke="#aaa" stroke-width="2.5" fill="none"/>
<path d="M701 139H708L711 142V152H701Z" fill="#f0f0e8" stroke="#888" stroke-width="1"/>
<text x="703" y="150" font-size="8" fill="#6a8a4a">S</text>
<path d="M717 139H724L727 142V152H717Z" fill="#eef4fc" stroke="#888" stroke-width="1"/>
<path d="M723 141L719 147H723L720 152" stroke="#3a90e0" stroke-width="1.2" fill="none"/>
<rect x="740" y="139" width="14" height="13" fill="#d83a2a"/><path d="M743 142V150M746 142V150M749 142V150" stroke="#f4c0b0" stroke-width="1"/>
<path d="M5 166L5 179L8 176L10 181L12 180L10 175L14 175Z" fill="#222"/>
<path d="M3 184V197" stroke="#c8c8c8"/><path d="M6 185H11L15 190L11 195H6Z" fill="#d8d040" stroke="#6a6a20"/><path d="M3 190H6M15 190H18" stroke="#6a6a20"/>
<path d="M10 201V213M4 207H16" stroke="#2a50a8" stroke-width="1.5"/><rect x="7" y="204" width="6" height="6" fill="#2a50a8"/>
<rect x="3" y="219" width="14" height="9" fill="#fff" stroke="#2a50a8" stroke-width="0.8"/><text x="4" y="227" font-size="7" fill="#2a50a8" font-weight="bold">LBL</text>
<path d="M4 237H16M4 240H16M4 243H16M4 246H16" stroke="#555" stroke-width="1"/>
<path d="M3 259H17M7 254V264M13 254V264" stroke="#2a50a8" stroke-width="2"/>
<rect x="6" y="270" width="8" height="14" fill="#d8d040" stroke="#6a6a20"/><path d="M10 268V286" stroke="#6a6a20"/>
<path d="M3 282H18" stroke="#c8c8c8"/>
<rect x="5" y="291" width="11" height="4" rx="1" fill="#d0c030"/><rect x="5" y="297" width="11" height="4" rx="1" fill="#d0c030"/>
<path d="M6 310H11L15 315L11 320H6Z" fill="none" stroke="#666"/><path d="M3 315H6" stroke="#666"/>
<path d="M4 327V341H17M5 338L9 331L12 336L16 329" stroke="#555" stroke-width="1" fill="none"/><path d="M5 340L9 334L12 338L16 333" stroke="#d03030" stroke-width="1" fill="none"/>
<rect x="4" y="346" width="13" height="9" fill="#777"/><rect x="6" y="349" width="9" height="3" fill="#ddd"/>
<circle cx="10" cy="369" r="6" fill="#3a70b0"/><path d="M6 369Q8 365 10 369Q12 373 14 369" stroke="#fff" stroke-width="1.2" fill="none"/>
<path d="M5 393L15 383" stroke="#c0b020" stroke-width="2.5"/><text x="3" y="385" font-size="7" fill="#333">V</text>
<path d="M5 411L15 401" stroke="#c0b020" stroke-width="2.5"/><text x="4" y="403" font-size="7" fill="#333">I</text>
<rect x="4" y="417" width="13" height="9" fill="#eee" stroke="#555"/><path d="M5 428H16" stroke="#555"/>
<path d="M3 435H18" stroke="#c8c8c8"/>
<path d="M4 450L16 438" stroke="#3a7a8a" stroke-width="1.5"/>
<rect x="4" y="455" width="12" height="11" fill="#5aa0a0" stroke="#3a7a7a"/>
<circle cx="10" cy="479" r="6" fill="#5aa0a0" stroke="#3a7a7a"/>
<path d="M4 490H9Q15 491 15 502" stroke="#555" fill="none"/><path d="M4 491V502H15" stroke="#aaa" stroke-dasharray="1 1" fill="none"/>
<circle cx="8" cy="514" r="4.5" fill="#5aa0a0"/><circle cx="13" cy="514" r="4.5" fill="#5aa0a0"/>
<text x="3" y="537" font-size="14" font-weight="bold" font-family="Liberation Serif" fill="#222">A</text>
<rect x="4" y="543" width="12" height="12" fill="#333"/><text x="6" y="553" font-size="10" font-weight="bold" fill="#5aa0a0">S</text>
<path d="M10 559V573M4 566H16" stroke="#333" stroke-width="1"/><rect x="8" y="564" width="4" height="4" fill="#333"/>
<path d="M3 580H18" stroke="#c8c8c8"/>
<path d="M15 595A5.5 5.5 0 1 0 14 603" stroke="#2a5ab0" stroke-width="2" fill="none"/><path d="M12 592L16 596L12 598Z" fill="#2a5ab0"/>
<path d="M5 612A5.5 5.5 0 1 1 6 620" stroke="#2a5ab0" stroke-width="2" fill="none"/><path d="M8 609L4 613L8 615Z" fill="#2a5ab0"/>
<rect x="1" y="624" width="18" height="14" fill="#fff" stroke="#333" stroke-width="0.8"/><text x="2" y="635" font-size="9" fill="#222">0</text>
<path d="M3 643H18" stroke="#c8c8c8"/>
<path d="M4 652H16" stroke="#2a5ab0" stroke-width="2"/><path d="M2 652L6 648V656ZM18 652L14 648V656Z" fill="#2a5ab0"/>
<path d="M10 664V676" stroke="#2a5ab0" stroke-width="2"/><path d="M10 662L6 666H14ZM10 678L6 674H14Z" fill="#2a5ab0"/>
</svg>
<div class="a" style="left:1519px;top:14px;width:12px;height:1.5px;background:#5a5a5a"></div>
<div class="a" style="left:1552px;top:10px;width:8px;height:8px;background:#aaa;border-top:1.3px solid #555;border-right:1.3px solid #555"></div><div class="a" style="left:1550px;top:12.5px;width:7.5px;height:7.5px;background:#fff;border:1.3px solid #555"></div>
<svg class="a" style="left:1580px;top:10px" width="10" height="10"><path d="M0.5 0.5L9.5 9.5M9.5 0.5L0.5 9.5" stroke="#555" stroke-width="1.3"/></svg>
<div class="a" style="left:695px;top:0;width:211px;height:24px;background:#2f3134;border-radius:0 0 5px 5px"></div>
<div class="t" style="left:702px;top:5px;font-size:13px;color:#f2f2f2"><i class="c">您</i><i class="c">正</i><i class="c">在</i><i class="c">观</i><i class="c">看</i>157****9691<i class="c">的</i><i class="c">屏</i><i class="c">幕</i></div>
<div class="a" style="left:878px;top:0;width:1px;height:24px;background:#45474a"></div>
<svg class="a" style="left:885px;top:5px" width="14" height="14"><path d="M1 3H12M1 7H9M1 11H9M10 9L12 11L14 9" stroke="#eee" stroke-width="1.4" fill="none"/></svg>
<div class="a" style="left:928px;top:3px;width:244px;height:36px;background:#333538"></div>
<div class="t" style="left:937px;top:14px;font-size:13px;color:#f0f0f0"><i class="c">正</i><i class="c">在</i><i class="c">讲</i><i class="c">话</i>:</div>
<svg class="a" style="left:1080px;top:8px" width="50" height="24"><path d="M2 20L14 6L22 14L30 6L46 20Z" fill="#4a4c4f"/></svg>
<div class="a" style="left:8px;top:35px;width:20px;height:20px;border:1px solid #e2e3e5;background:#f2f3f5"></div>
<div class="a" style="left:36px;top:35px;width:20px;height:20px;border:1px solid #e2e3e5;background:#f2f3f5"></div>
<div class="a" style="left:64px;top:35px;width:20px;height:20px;border:1px solid #e2e3e5;background:#f2f3f5"></div>
<div class="a" style="left:11px;top:38px;width:14px;height:14px;border-radius:50%;background:#5f6166"></div><div class="t" style="left:16px;top:39px;font-size:11px;font-weight:bold;color:#fff">i</div>
<svg class="a" style="left:38px;top:37px" width="16" height="16"><path d="M8 1L14 3V8C14 11 11 14 8 15C5 14 2 11 2 8V3Z" fill="#1a6cf0"/><path d="M8 5V11M5 8H11" stroke="#fff" stroke-width="1.8"/></svg>
<div class="a" style="left:67px;top:45px;width:3px;height:6px;background:#22b05a"></div><div class="a" style="left:72px;top:42px;width:3px;height:9px;background:#22b05a"></div><div class="a" style="left:77px;top:38px;width:3px;height:13px;background:#22b05a"></div>
<div class="a" style="left:993px;top:39px;width:48px;height:16px;background:#eff0f2;border:1px solid #dcdde0"></div><div class="t" style="left:1001px;top:40px;font-size:13px;color:#222">35:46</div>
<div class="a" style="left:1051px;top:39px;width:109px;height:16px;background:#eff0f2;border:1px solid #dcdde0"></div>
<div class="a" style="left:1059px;top:39px;width:4px;height:13px;background:#555"></div><div class="a" style="left:1059px;top:48px;width:13px;height:4px;background:#555"></div>
<div class="t" style="left:1076px;top:38px;font-size:13px;color:#222"><i class="c">演</i><i class="c">讲</i><i class="c">者</i><i class="c">视</i><i class="c">图</i></div>
<svg class="a" style="left:1144px;top:42px" width="8" height="6"><path d="M0 0H8L4 5Z" fill="#444"/></svg>
<svg class="a" style="left:1172px;top:37px" width="18" height="16"><path d="M1 5V1H5M13 1H17V5M17 11V15H13M5 15H1V11" stroke="#555" stroke-width="1.8" fill="none"/></svg>
<div class="a" style="left:1205px;top:35px;width:20px;height:20px;background:#eef0f2;border:1px solid #dfe0e2"></div><div class="a" style="left:1208px;top:38px;width:14px;height:13px;border:1.8px solid #555"></div><div class="a" style="left:1217px;top:38px;width:1.8px;height:13px;background:#555"></div>
<div class="a" style="left:11px;top:73px;width:86px;height:29px;background:#1f2023;border-radius:2px"></div>
<div class="a" style="left:12px;top:99px;width:84px;height:3px;background:#6b6b6b"></div>
<svg class="a" style="left:21px;top:79px" width="12" height="17"><path d="M2 1H10M4 1V7L1 10H11L8 7V1M6 10V16" stroke="#9a9a9a" stroke-width="2" fill="#9a9a9a"/></svg>
<div class="t" style="left:42px;top:82px;font-size:11px;color:#f4f4f4"><i class="c">锁</i><i class="c">定</i><i class="c">画</i><i class="c">面</i></div>
<div class="a" style="left:0;top:738px;width:1230px;height:20px;background:#f0f0f0"></div>
<div class="a" style="left:8px;top:742px;width:126px;height:14px;background:#f2f2f2;border:1px solid #555"></div>
<div class="a" style="left:39px;top:742px;width:1px;height:14px;background:#555"></div>
<div class="a" style="left:70px;top:742px;width:1px;height:14px;background:#555"></div>
<div class="a" style="left:102px;top:742px;width:1px;height:14px;background:#555"></div>
<svg class="a" style="left:8px;top:742px" width="126" height="14"><path d="M13 3L20 7L13 11Z" fill="#111"/><path d="M43 3V11M46 3L51 7L46 11Z" fill="#111" stroke="#111" stroke-width="1.5"/><path d="M76 3V11M80 3V11" stroke="#111" stroke-width="2"/><rect x="105" y="3" width="8" height="8" fill="#111"/></svg>
<div class="a" style="left:138px;top:741px;width:78px;height:16px;border:1px solid #ddd;background:#f3f3f3"></div>
<div class="a" style="left:141px;top:743px;width:11px;height:11px;border-radius:50%;background:#555"></div><div class="t" style="left:145px;top:744px;font-size:9px;font-weight:bold;color:#fff">i</div>
<div class="t" style="left:158px;top:744px;font-size:9px;color:#a0a0a0">No Messages</div>
<div class="a" style="left:221px;top:740px;width:1px;height:17px;background:#ccc"></div>
<div class="a" style="left:228px;top:741px;width:890px;height:16px;border-left:1px solid #999;border-top:1px solid #bbb;background:#f5f5f5"></div>
<div class="t" style="left:230px;top:744px;font-size:9px;color:#111">Root sheet 1</div>
<div class="a" style="left:1125px;top:741px;width:100px;height:16px;border-left:1px solid #bbb;border-top:1px solid #ccc;background:#f5f5f5"></div>
<div class="a" style="left:12px;top:706px;width:140px;height:29px;background:rgba(95,95,95,0.75);border-radius:3px"></div>
<div class="a" style="left:21px;top:713px;width:16px;height:16px;border-radius:50%;background:#c8c8c8"></div>
<div class="a" style="left:43px;top:711px;width:1px;height:19px;background:#8a8a8a"></div>
<div class="t" style="left:57px;top:714px;font-size:12px;color:#d8d8d8"><i class="c">说</i><i class="c">点</i><i class="c">什</i><i class="c">么</i>...</div>
<div class="t" style="left:131px;top:713px;font-size:12px;color:#aaa">&lsaquo;</div>
<div class="a" style="left:1214px;top:425px;width:16px;height:39px;background:#505255;border-radius:4px 0 0 4px"></div><svg class="a" style="left:1217px;top:438px" width="8" height="12"><path d="M6 1L2 6L6 11" stroke="#ddd" stroke-width="1.5" fill="none"/></svg>
<div class="a" style="left:0;top:759px;width:1230px;height:32px;background:#202124"></div>
<svg class="a" style="left:12px;top:768px" width="15" height="14"><path d="M0 1.5L6.5 0.6V6.5H0ZM7.5 0.5L15 -0.5V6.5H7.5ZM0 7.5H6.5V13.4L0 12.5ZM7.5 7.5H15V14.5L7.5 13.5Z" fill="#fff"/></svg>
<div class="a" style="left:38px;top:759px;width:276px;height:31px;background:#f1f1f1"></div>
<svg class="a" style="left:47px;top:767px" width="16" height="16"><circle cx="9.5" cy="6" r="4.5" stroke="#333" stroke-width="1.4" fill="none"/><path d="M6.5 9L1.5 14" stroke="#333" stroke-width="1.6"/></svg>
<div class="t" style="left:70px;top:767px;font-size:13px;color:#6a6a6a"><i class="c">在</i><i class="c">这</i><i class="c">里</i><i class="c">输</i><i class="c">入</i><i class="c">你</i><i class="c">要</i><i class="c">搜</i><i class="c">索</i><i class="c">的</i><i class="c">内</i><i class="c">容</i></div>
<div class="a" style="left:326px;top:768px;width:14px;height:14px;border:2px solid #fff;border-radius:50%"></div>
<svg class="a" style="left:363px;top:767px" width="18" height="16"><path d="M2 3H14M2 13H14M5 3V13M11 3V13M16 3V13" stroke="#fff" stroke-width="1.5" fill="none"/></svg>
<div class="a" style="left:552px;top:759px;width:39px;height:32px;background:#4a4b4f"></div>
<div class="a" style="left:403px;top:767px;width:17px;height:17px;background:#f4f4f4;border-radius:2px"></div><div class="a" style="left:408px;top:772px;width:3px;height:3px;background:#f25022"></div><div class="a" style="left:412px;top:772px;width:3px;height:3px;background:#7fba00"></div><div class="a" style="left:408px;top:776px;width:3px;height:3px;background:#00a4ef"></div><div class="a" style="left:412px;top:776px;width:3px;height:3px;background:#ffb900"></div>
<div class="a" style="left:443px;top:767px;width:18px;height:15px;background:#f5c242;border-radius:1px"></div><div class="a" style="left:447px;top:775px;width:10px;height:6px;background:#2d7bd6"></div>
<div class="a" style="left:483px;top:766px;width:18px;height:18px;border-radius:50%;background:conic-gradient(from -30deg,#ea4335 0 120deg,#fbbc05 120deg 240deg,#34a853 240deg 360deg)"></div><div class="a" style="left:488px;top:771px;width:8px;height:8px;border-radius:50%;background:#4285f4;border:1.5px solid #fff"></div>
<div class="a" style="left:522px;top:766px;width:18px;height:18px;border-radius:50%;background:#d24726"></div><div class="t" style="left:525px;top:770px;font-size:10px;font-weight:bold;color:#fff">P</div>
<div class="a" style="left:562px;top:766px;width:18px;height:17px;background:#1672e8;border-radius:3px"></div><svg class="a" style="left:563px;top:769px" width="16" height="11"><path d="M1 10L5 3L8 7L11 3L15 10Z" fill="#fff"/></svg>
<div class="a" style="left:601px;top:766px;width:20px;height:16px;background:#1414c8;border:1px solid #6a6aff"></div><div class="t" style="left:603px;top:767px;font-size:12px;color:#fff;font-style:italic">isis</div>
<div class="a" style="left:436px;top:789px;width:33px;height:2px;background:#76a9dc"></div>
<div class="a" style="left:476px;top:789px;width:33px;height:2px;background:#76a9dc"></div>
<div class="a" style="left:515px;top:789px;width:33px;height:2px;background:#76a9dc"></div>
<div class="a" style="left:554px;top:789px;width:33px;height:2px;background:#76a9dc"></div>
<div class="a" style="left:595px;top:789px;width:33px;height:2px;background:#76a9dc"></div>
<svg class="a" style="left:988px;top:769px" width="14" height="9"><path d="M1 8L7 2L13 8" stroke="#ddd" stroke-width="1.3" fill="none"/></svg>
<div class="a" style="left:1009px;top:768px;width:11px;height:14px;border-radius:50% 50% 40% 40%;background:#d8823a"></div><div class="a" style="left:1010px;top:768px;width:7px;height:7px;border-radius:50%;background:#222"></div>
<div class="a" style="left:1027px;top:771px;width:13px;height:8px;background:#eee"></div>
<svg class="a" style="left:1044px;top:768px" width="14" height="14"><path d="M1 5H4L7 2V12L4 9H1Z" stroke="#ddd" stroke-width="1.2" fill="none"/><path d="M9 4Q11 7 9 10M11 2Q14 7 11 12" stroke="#999" stroke-width="1" fill="none"/></svg>
<svg class="a" style="left:1066px;top:770px" width="14" height="12"><path d="M2 11Q4 5 11 3M5 11Q7 8 11 6" stroke="#aaa" stroke-width="1.2" fill="none"/><circle cx="10" cy="10" r="1.5" fill="#ddd"/></svg>
<div class="t" style="left:1083px;top:768px;font-size:13px;color:#fff"><i class="c">中</i></div>
<div class="a" style="left:1107px;top:769px;width:12px;height:12px;background:#f4f4f4"></div><svg class="a" style="left:1108px;top:770px" width="10" height="10"><path d="M2 1V9M0 4H4M5 3H10M5 6H10M7 1V9" stroke="#202124" stroke-width="1"/></svg>
<div class="t" style="left:1145px;top:763px;font-size:10.5px;color:#fff">18:46</div>
<div class="t" style="left:1134px;top:777px;font-size:10.5px;color:#fff">2022/3/19</div>
<svg class="a" style="left:1196px;top:767px" width="16" height="16"><path d="M1 1H15V12H6L3 15V12H1Z" fill="#eee"/><path d="M4 4H12M4 7H12M4 10H9" stroke="#202124" stroke-width="1"/></svg>
<div class="a" style="left:1226px;top:759px;width:1px;height:32px;background:#777"></div>
<div class="a" style="left:0;top:791px;width:1230px;height:17px;background:#2b2d30"></div>
<div class="a" style="left:427px;top:641px;width:289px;height:118px;background:#6e6d6a"></div>
<div class="a" style="left:433px;top:647px;width:13px;height:13px;background:#2d7be8;border-radius:50%"></div><svg class="a" style="left:435px;top:651px" width="9" height="5"><path d="M0 5L3 1L5 3L7 1L9 5Z" fill="#fff"/></svg>
<div class="t" style="left:452px;top:648px;font-size:11px;color:#f0f0f0"><i class="c">腾</i><i class="c">讯</i><i class="c">会</i><i class="c">议</i></div>
<div class="a" style="left:514px;top:647px;width:13px;height:13px;background:#2d7be8;border-radius:50%"></div><svg class="a" style="left:516px;top:651px" width="9" height="5"><path d="M0 5L3 1L5 3L7 1L9 5Z" fill="#fff"/></svg>
<div class="t" style="left:533px;top:648px;font-size:11px;color:#f0f0f0"><i class="c">管</i><i class="c">理</i><i class="c">成</i><i class="c">员</i>(31)</div>
<div class="a" style="left:630px;top:647px;width:13px;height:13px;background:#2d7be8;border-radius:50%"></div><svg class="a" style="left:632px;top:651px" width="9" height="5"><path d="M0 5L3 1L5 3L7 1L9 5Z" fill="#fff"/></svg>
<div class="t" style="left:649px;top:648px;font-size:11px;color:#f0f0f0"><i class="c">聊</i><i class="c">天</i></div>
<div class="a" style="left:440px;top:668px;width:52px;height:88px;background:#f6f7f9"></div>
<div class="a" style="left:515px;top:668px;width:100px;height:88px;background:#f7f8f9"></div>
<div class="a" style="left:631px;top:668px;width:78px;height:88px;background:#f7f8f9"></div>
<div class="a" style="left:445px;top:683px;width:5px;height:5px;background:#3b82e0"></div>
<div class="a" style="left:457px;top:683px;width:5px;height:5px;background:#3b82e0"></div>
<div class="a" style="left:469px;top:683px;width:5px;height:5px;background:#3b82e0"></div>
<div class="a" style="left:481px;top:683px;width:5px;height:5px;background:#3b82e0"></div>
<div class="a" style="left:519px;top:683px;width:5px;height:5px;border-radius:50%;background:#555"></div><div class="a" style="left:527px;top:685px;width:18px;height:1.5px;background:#bbb"></div>
<div class="a" style="left:519px;top:692px;width:5px;height:5px;border-radius:50%;background:#555"></div><div class="a" style="left:527px;top:694px;width:18px;height:1.5px;background:#bbb"></div>
<div class="a" style="left:519px;top:701px;width:5px;height:5px;border-radius:50%;background:#555"></div><div class="a" style="left:527px;top:703px;width:18px;height:1.5px;background:#bbb"></div>
<div class="a" style="left:519px;top:710px;width:5px;height:5px;border-radius:50%;background:#555"></div><div class="a" style="left:527px;top:712px;width:18px;height:1.5px;background:#bbb"></div>
<div class="a" style="left:519px;top:719px;width:5px;height:5px;border-radius:50%;background:#555"></div><div class="a" style="left:527px;top:721px;width:18px;height:1.5px;background:#bbb"></div>
<div class="a" style="left:519px;top:728px;width:5px;height:5px;border-radius:50%;background:#555"></div><div class="a" style="left:527px;top:730px;width:18px;height:1.5px;background:#bbb"></div>
<div class="a" style="left:519px;top:737px;width:5px;height:5px;border-radius:50%;background:#555"></div><div class="a" style="left:527px;top:739px;width:18px;height:1.5px;background:#bbb"></div>
<div class="a" style="left:588px;top:684px;width:23px;height:4px;background:#3b82e0"></div>
<div class="a" style="left:643px;top:692px;width:32px;height:22px;background:#c9cbb8"></div>
<div class="a" style="left:635px;top:674px;width:22px;height:1.5px;background:#999"></div><div class="a" style="left:635px;top:684px;width:28px;height:1.5px;background:#888"></div><div class="a" style="left:635px;top:718px;width:30px;height:1.5px;background:#7aa8e0"></div><div class="a" style="left:635px;top:723px;width:12px;height:1.5px;background:#777"></div><div class="a" style="left:635px;top:734px;width:16px;height:1px;background:#aaa"></div>
<div class="a" style="left:445px;top:675px;width:6px;height:6px;border-radius:50%;background:#666"></div><div class="a" style="left:453px;top:677px;width:14px;height:1.5px;background:#7aa8e0"></div><div class="a" style="left:462px;top:717px;width:10px;height:10px;background:#e4e8ee"></div><div class="a" style="left:550px;top:751px;width:8px;height:1px;background:#8ab0e0"></div><div class="a" style="left:575px;top:751px;width:14px;height:1px;background:#8ab0e0"></div>
<svg class="a" style="left:598px;top:744px" width="10" height="14"><path d="M1 1V12L4 9L6 13L8 12L6 8H10Z" fill="#fff" stroke="#222" stroke-width="0.8"/></svg>
<div class="a" style="left:0;top:808px;width:1230px;height:43px;background:#fff"></div>
<svg class="a" style="left:22px;top:813px" width="22" height="26"><rect x="7" y="1" width="8" height="15" rx="4" fill="#3d3f42"/><path d="M3 12Q3 20 11 20Q19 20 19 12M11 20V24M6 24H16" stroke="#3d3f42" stroke-width="1.8" fill="none"/><path d="M2 22L20 3" stroke="#e8404a" stroke-width="2"/></svg>
<svg class="a" style="left:86px;top:817px" width="26" height="18"><rect x="0" y="1" width="17" height="15" rx="1.5" fill="#3d3f42"/><path d="M18 6L24 2V16L18 12Z" fill="#3d3f42"/><path d="M1 17L17 0" stroke="#e8404a" stroke-width="2"/></svg>
<svg class="a" style="left:60px;top:829px" width="10" height="7"><path d="M1 6L5 2L9 6" stroke="#333" stroke-width="1.5" fill="none"/></svg>
<svg class="a" style="left:126px;top:829px" width="10" height="7"><path d="M1 6L5 2L9 6" stroke="#333" stroke-width="1.5" fill="none"/></svg>
<svg class="a" style="left:469px;top:829px" width="10" height="7"><path d="M1 6L5 2L9 6" stroke="#333" stroke-width="1.5" fill="none"/></svg>
<div class="t" style="left:10px;top:842px;font-size:11px;color:#444"><i class="c">解</i><i class="c">除</i><i class="c">静</i><i class="c">音</i></div>
<div class="t" style="left:76px;top:842px;font-size:11px;color:#444"><i class="c">开</i><i class="c">启</i><i class="c">视</i><i class="c">频</i></div>
<svg class="a" style="left:428px;top:816px" width="26" height="22"><rect x="1" y="1" width="24" height="16" rx="1.5" fill="#3d3f42"/><path d="M8 19H18" stroke="#3d3f42" stroke-width="2"/><path d="M9 12Q10 7 15 7V5L18 8L15 11V9Q12 9 9 12Z" fill="#fff"/></svg>
<svg class="a" style="left:496px;top:815px" width="24" height="22"><circle cx="10" cy="5" r="4" fill="#3d3f42"/><path d="M2 20Q2 11 10 11Q15 11 16 14V20Z" fill="#3d3f42"/><circle cx="18" cy="16" r="5" fill="#3d3f42" stroke="#fff" stroke-width="1.2"/><path d="M18 13V19M15 16H21" stroke="#fff" stroke-width="1.5"/></svg>
<svg class="a" style="left:549px;top:815px" width="24" height="22"><circle cx="12" cy="5" r="4.5" fill="#3d3f42"/><path d="M2 21Q2 11 12 11Q22 11 22 21Z" fill="#3d3f42"/></svg>
<svg class="a" style="left:604px;top:818px" width="22" height="20"><path d="M1 1H21V15H12L9 19V15H1Z" fill="#3d3f42"/><circle cx="6" cy="8" r="1.4" fill="#fff"/><circle cx="11" cy="8" r="1.4" fill="#fff"/><circle cx="16" cy="8" r="1.4" fill="#fff"/></svg>
<svg class="a" style="left:665px;top:815px" width="23" height="23"><circle cx="11.5" cy="11.5" r="10.3" fill="none" stroke="#3d3f42" stroke-width="1.6"/><circle cx="11.5" cy="11.5" r="8" fill="#3d3f42"/></svg>
<svg class="a" style="left:727px;top:815px" width="22" height="22"><rect x="1" y="3" width="8" height="8" rx="1.5" fill="#3d3f42"/><rect x="1" y="13" width="8" height="8" rx="1.5" fill="#3d3f42"/><rect x="11" y="13" width="8" height="8" rx="1.5" fill="#3d3f42"/><path d="M15 1L20 6L15 11L10 6Z" fill="none" stroke="#3d3f42" stroke-width="1.4"/></svg>
<svg class="a" style="left:781px;top:815px" width="22" height="22"><path d="M9 1H13L13.8 4L16.5 5.2L19.2 3.6L21.4 6.4L19.6 9L20 11.5L21 13.5L19 16.5L16.3 16L14 18L13 21H9L8 18L5.7 16.8L3 18.4L0.8 15.6L2.6 13L2 11L1 8.5L3 5.5L5.7 6L8 4Z" fill="#3d3f42"/><circle cx="11" cy="11" r="3.6" fill="#fff"/></svg>
<div class="t" style="left:418px;top:842px;font-size:11px;color:#444"><i class="c">共</i><i class="c">享</i><i class="c">屏</i><i class="c">幕</i></div>
<div class="t" style="left:496px;top:842px;font-size:11px;color:#444"><i class="c">邀</i><i class="c">请</i></div>
<div class="t" style="left:539px;top:842px;font-size:11px;color:#444"><i class="c">成</i><i class="c">员</i>(31)</div>
<div class="t" style="left:604px;top:842px;font-size:11px;color:#444"><i class="c">聊</i><i class="c">天</i></div>
<div class="t" style="left:665px;top:842px;font-size:11px;color:#444"><i class="c">录</i><i class="c">制</i></div>
<div class="t" style="left:727px;top:842px;font-size:11px;color:#444"><i class="c">应</i><i class="c">用</i></div>
<div class="t" style="left:781px;top:842px;font-size:11px;color:#444"><i class="c">设</i><i class="c">置</i></div>
<div class="a" style="left:1143px;top:816px;width:75px;height:38px;border:1px solid #e05252;border-radius:4px;background:#fff"></div>
<div class="t" style="left:1153px;top:828px;font-size:13px;color:#e24a4a"><i class="c">离</i><i class="c">开</i><i class="c">会</i><i class="c">议</i></div>
<div class="a" style="left:1230px;top:30px;width:370px;height:30px;background:#eceef1;border-top:1px solid #e0e1e4;border-bottom:1px solid #dcdde0"></div>
<div class="a" style="left:1230px;top:30px;width:171px;height:29px;background:#fff;border-top:1px solid #e0e1e4;border-right:1px solid #dcdde0"></div>
<div class="a" style="left:1571px;top:31px;width:1px;height:28px;background:#d6d7da"></div>
<svg class="a" style="left:1235px;top:38px" width="15" height="14"><path d="M1 1H14V10H7L4 13V10H1Z" fill="#8d9095"/><circle cx="4.5" cy="5.5" r="1" fill="#fff"/><circle cx="7.5" cy="5.5" r="1" fill="#fff"/><circle cx="10.5" cy="5.5" r="1" fill="#fff"/></svg>
<div class="t" style="left:1254px;top:38px;font-size:13px;color:#222"><i class="c">聊</i><i class="c">天</i></div>
<svg class="a" style="left:1371px;top:39px" width="28" height="12"><path d="M10 1H1V11H10M4 4H10M5 7H10M5 10H10" stroke="#999" stroke-width="1" fill="none"/><path d="M17 1.5L26 10.5M26 1.5L17 10.5" stroke="#888" stroke-width="1.2"/></svg>
<svg class="a" style="left:1406px;top:37px" width="15" height="15"><circle cx="7.5" cy="4.5" r="3.5" fill="#8d9095"/><path d="M0.5 14Q0.5 8.5 7.5 8.5Q14.5 8.5 14.5 14Z" fill="#8d9095"/></svg>
<div class="t" style="left:1424px;top:38px;font-size:13px;color:#222"><i class="c">成</i><i class="c">员</i>(31)</div>
<svg class="a" style="left:1580px;top:39px" width="11" height="11"><path d="M1 2H10M1 5.5H10M1 9H10" stroke="#8d9095" stroke-width="1.3"/></svg>
<div class="a" style="left:1230px;top:60px;width:370px;height:558px;background:#f7f8fa"></div>
<div class="a" style="left:1593px;top:305px;width:6px;height:313px;background:#e4e5e8;border-radius:3px"></div>
<div class="t" style="left:1240px;top:59.5px;font-size:14.5px;color:#111"><i class="c">可</i><i class="c">以</i></div>
<div class="t" style="left:1240px;top:104.5px;font-size:14.5px;color:#2a78d6">157****9691</div>
<div class="t" style="left:1240px;top:128.5px;font-size:14.5px;color:#111"><i class="c">有</i><i class="c">问</i><i class="c">题</i><i class="c">吗</i></div>
<div class="t" style="left:1240px;top:154.5px;font-size:14.5px;color:#2a78d6"><i class="c">电</i><i class="c">子</i>0113<i class="c">李</i><i class="c">少</i><i class="c">阳</i></div>
<div class="t" style="left:1240px;top:180.5px;font-size:14.5px;color:#111"><i class="c">图</i><i class="c">咋</i><i class="c">画</i><i class="c">出</i><i class="c">来</i><i class="c">的</i><i class="c">？</i>[<i class="c">表</i><i class="c">情</i>]</div>
<div class="t" style="left:1240px;top:206.5px;font-size:14.5px;color:#2a78d6"><i class="c">电</i><i class="c">子</i>0113<i class="c">李</i><i class="c">少</i><i class="c">阳</i></div>
<div class="t" style="left:1240px;top:232.5px;font-size:14.5px;color:#111"><i class="c">选</i><i class="c">出</i><i class="c">来</i><i class="c">了</i><i class="c">，</i><i class="c">画</i><i class="c">不</i><i class="c">出</i><i class="c">来</i></div>
<div class="t" style="left:1240px;top:258.5px;font-size:14.5px;color:#2a78d6"><i class="c">电</i><i class="c">子</i>0113<i class="c">李</i><i class="c">少</i><i class="c">阳</i></div>
<div class="t" style="left:1240px;top:284.5px;font-size:14.5px;color:#111"><i class="c">能</i></div>
<div class="t" style="left:1240px;top:310.5px;font-size:14.5px;color:#2a78d6"><i class="c">电</i><i class="c">子</i>0113<i class="c">李</i><i class="c">少</i><i class="c">阳</i></div>
<div class="t" style="left:1240px;top:336.5px;font-size:14.5px;color:#111"><i class="c">喔</i><i class="c">，</i><i class="c">如</i><i class="c">此</i><i class="c">，</i><i class="c">谢</i><i class="c">谢</i></div>
<div class="t" style="left:1240px;top:361.5px;font-size:14.5px;color:#2a78d6">157****9691</div>
<div class="t" style="left:1240px;top:384.5px;font-size:14.5px;color:#111"><i class="c">还</i><i class="c">有</i><i class="c">别</i><i class="c">的</i><i class="c">问</i><i class="c">题</i><i class="c">吗</i></div>
<div class="t" style="left:1240px;top:408.5px;font-size:14.5px;color:#2a78d6">157****9691</div>
<div class="t" style="left:1240px;top:547.5px;font-size:14.5px;color:#2a78d6"><i class="c">电</i><i class="c">子</i>0113<i class="c">李</i><i class="c">少</i><i class="c">阳</i></div>
<div class="t" style="left:1240px;top:573.5px;font-size:14.5px;color:#111"><i class="c">正</i><i class="c">在</i><i class="c">画</i></div>
<div class="t" style="left:1400px;top:83px;font-size:13px;color:#c4c6ca">18:38</div>
<div class="a" style="left:1230px;top:30px;width:370px;height:0"></div>
<svg class="a" style="left:1240px;top:425px" width="158" height="108" viewBox="0 0 158 108"><rect width="158" height="108" fill="#dedfce"/><g stroke-width="0.8"><path d="M2.0 0V108" stroke="#aeb0a0"/><path d="M6.4 0V108" stroke="#c6c8b6"/><path d="M10.8 0V108" stroke="#c6c8b6"/><path d="M15.2 0V108" stroke="#aeb0a0"/><path d="M19.6 0V108" stroke="#c6c8b6"/><path d="M24.0 0V108" stroke="#c6c8b6"/><path d="M28.4 0V108" stroke="#aeb0a0"/><path d="M32.8 0V108" stroke="#c6c8b6"/><path d="M37.2 0V108" stroke="#c6c8b6"/><path d="M41.6 0V108" stroke="#aeb0a0"/><path d="M46.0 0V108" stroke="#c6c8b6"/><path d="M50.4 0V108" stroke="#c6c8b6"/><path d="M54.8 0V108" stroke="#aeb0a0"/><path d="M59.2 0V108" stroke="#c6c8b6"/><path d="M63.6 0V108" stroke="#c6c8b6"/><path d="M68.0 0V108" stroke="#aeb0a0"/><path d="M72.4 0V108" stroke="#c6c8b6"/><path d="M76.8 0V108" stroke="#c6c8b6"/><path d="M81.2 0V108" stroke="#aeb0a0"/><path d="M85.6 0V108" stroke="#c6c8b6"/><path d="M90.0 0V108" stroke="#c6c8b6"/><path d="M94.4 0V108" stroke="#aeb0a0"/><path d="M98.8 0V108" stroke="#c6c8b6"/><path d="M103.2 0V108" stroke="#c6c8b6"/><path d="M107.6 0V108" stroke="#aeb0a0"/><path d="M112.0 0V108" stroke="#c6c8b6"/><path d="M116.4 0V108" stroke="#c6c8b6"/><path d="M120.8 0V108" stroke="#aeb0a0"/><path d="M125.2 0V108" stroke="#c6c8b6"/><path d="M129.6 0V108" stroke="#c6c8b6"/><path d="M134.0 0V108" stroke="#aeb0a0"/><path d="M138.4 0V108" stroke="#c6c8b6"/><path d="M142.8 0V108" stroke="#c6c8b6"/><path d="M147.2 0V108" stroke="#aeb0a0"/><path d="M151.6 0V108" stroke="#c6c8b6"/><path d="M156.0 0V108" stroke="#c6c8b6"/><path d="M0 3.0H158" stroke="#b6b8a6"/><path d="M0 8.2H158" stroke="#cdcfbd"/><path d="M0 13.4H158" stroke="#cdcfbd"/><path d="M0 18.6H158" stroke="#cdcfbd"/><path d="M0 23.8H158" stroke="#b6b8a6"/><path d="M0 29.0H158" stroke="#cdcfbd"/><path d="M0 34.2H158" stroke="#cdcfbd"/><path d="M0 39.4H158" stroke="#cdcfbd"/><path d="M0 44.6H158" stroke="#b6b8a6"/><path d="M0 49.8H158" stroke="#cdcfbd"/><path d="M0 55.0H158" stroke="#cdcfbd"/><path d="M0 60.2H158" stroke="#cdcfbd"/><path d="M0 65.4H158" stroke="#b6b8a6"/><path d="M0 70.6H158" stroke="#cdcfbd"/><path d="M0 75.8H158" stroke="#cdcfbd"/><path d="M0 81.0H158" stroke="#cdcfbd"/><path d="M0 86.2H158" stroke="#b6b8a6"/><path d="M0 91.4H158" stroke="#cdcfbd"/><path d="M0 96.6H158" stroke="#cdcfbd"/><path d="M0 101.8H158" stroke="#cdcfbd"/><path d="M0 107.0H158" stroke="#b6b8a6"/></g><rect x="93.5" y="15.5" width="40" height="78" fill="#c9c9b0"/><path d="M93.5 15.5H133.5" stroke="#b03030" stroke-width="1.2"/><path d="M93.5 93.5H133.5" stroke="#b06060" stroke-width="0.8"/><path d="M20 12.5H84.5V18.5H93M61 38.5H93M8.5 56V73M49.5 55V73" stroke="#2b5a30" stroke-width="1.3" fill="none"/><g stroke="#c03030" stroke-width="1.1"><path d="M134 17H143"/><path d="M134 29H143"/><path d="M134 38H143"/><path d="M134 46H143"/><path d="M134 56H143"/><path d="M134 64H143"/><path d="M134 69H143"/><path d="M134 84H143"/><path d="M134 88H143"/><path d="M134 92H143"/><path d="M86 87H93"/><path d="M86 90H93"/><path d="M86 93H93"/></g><g fill="#888"><rect x="125" y="17.0" width="7" height="1.5"/><rect x="125" y="21.5" width="7" height="1.5"/><rect x="125" y="26.0" width="7" height="1.5"/><rect x="125" y="30.5" width="7" height="1.5"/><rect x="125" y="35.0" width="7" height="1.5"/><rect x="125" y="39.5" width="7" height="1.5"/><rect x="125" y="44.0" width="7" height="1.5"/><rect x="125" y="48.5" width="7" height="1.5"/><rect x="125" y="53.0" width="7" height="1.5"/><rect x="125" y="57.5" width="7" height="1.5"/><rect x="125" y="62.0" width="7" height="1.5"/><rect x="125" y="66.5" width="7" height="1.5"/><rect x="125" y="71.0" width="7" height="1.5"/><rect x="125" y="75.5" width="7" height="1.5"/><rect x="125" y="80.0" width="7" height="1.5"/><rect x="125" y="84.5" width="7" height="1.5"/><rect x="125" y="89.0" width="7" height="1.5"/><rect x="96" y="17" width="4" height="1.3"/><rect x="96" y="24" width="4" height="1.3"/><rect x="96" y="31" width="4" height="1.3"/><rect x="96" y="38" width="4" height="1.3"/><rect x="96" y="45" width="4" height="1.3"/><rect x="96" y="52" width="4" height="1.3"/><rect x="96" y="59" width="4" height="1.3"/><rect x="96" y="66" width="4" height="1.3"/><rect x="96" y="73" width="4" height="1.3"/><rect x="96" y="80" width="4" height="1.3"/><rect x="96" y="87" width="4" height="1.3"/></g><path d="M27 56V64M31 56V64" stroke="#b04040" stroke-width="1.5"/><path d="M24 75H33" stroke="#b04040" stroke-width="1.5"/><circle cx="34" cy="74.5" r="1.5" fill="#900"/><path d="M57 66H68M55 71H62" stroke="#999" stroke-width="1"/><path d="M17 93H24" stroke="#777" stroke-width="1"/></svg>
<div class="a" style="left:1230px;top:618px;width:370px;height:233px;background:#fff"></div>
<div class="t" style="left:1241px;top:626px;font-size:13px;color:#222"><i class="c">发</i><i class="c">送</i><i class="c">至</i>:</div>
<div class="t" style="left:1299px;top:626px;font-size:13px;color:#2a78d6"><i class="c">所</i><i class="c">有</i><i class="c">人</i></div>
<svg class="a" style="left:1342px;top:630px" width="7" height="5"><path d="M0 0H7L3.5 4Z" fill="#2a78d6"/></svg>
<svg class="a" style="left:1544px;top:625px" width="48" height="15"><path d="M1 2H7L8 4H14V13H1Z" stroke="#555" stroke-width="1.2" fill="none"/><path d="M16 6H21L18.5 9Z" fill="#555"/><path d="M32 5H35L39 1.5V13.5L35 10H32Z" stroke="#555" stroke-width="1.2" fill="none"/><path d="M42 4Q44.5 7.5 42 11" stroke="#555" stroke-width="1.2" fill="none"/></svg>
<div class="t" style="left:1240px;top:650px;font-size:13px;color:#c6c8cc"><i class="c">请</i><i class="c">输</i><i class="c">入</i><i class="c">消</i><i class="c">息</i>...</div>
<div class="t" style="left:1522px;top:839px;font-size:12px;color:#888"><i class="c">发</i><i class="c">送</i>(S)</div>
<div class="a" style="left:1573px;top:836px;width:1px;height:15px;background:#ddd"></div>
<svg class="a" style="left:1580px;top:845px" width="9" height="6"><path d="M1 1L4.5 4.5L8 1" stroke="#888" stroke-width="1.2" fill="none"/></svg>
</body></html>
